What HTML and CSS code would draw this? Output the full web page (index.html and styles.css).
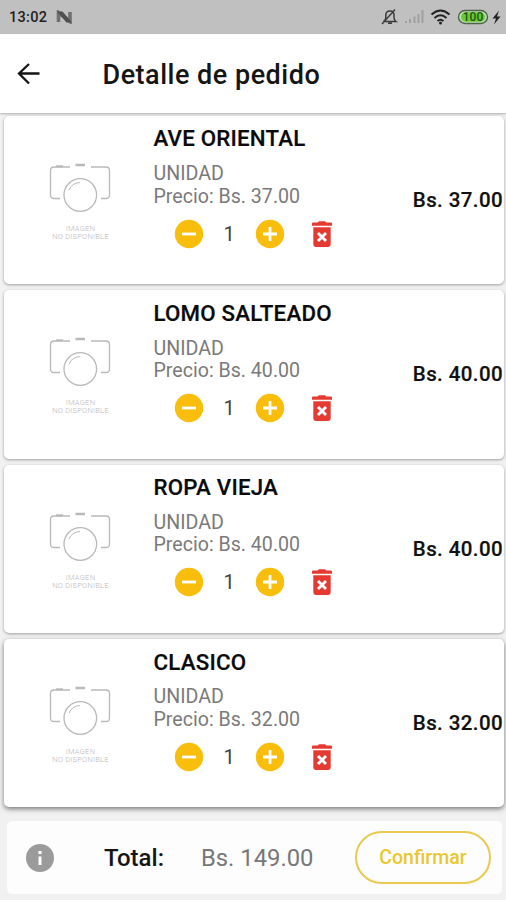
FILE: index.html
```html
<!DOCTYPE html>
<html lang="es">
<head>
<meta charset="utf-8">
<title>Detalle de pedido</title>
<link rel="stylesheet" href="styles.css">
</head>
<body>
<svg class="defs" width="0" height="0" aria-hidden="true">
  <symbol id="camera" viewBox="0 0 80 70">
    <g fill="none" stroke="#b9b9b9" stroke-width="1.300">
      <path d="M30 13H14q-3.500 0-3.500 3.500V41q0 3.500 3.500 3.500H20M51 13H66q3.500 0 3.500 3.500V41q0 3.500-3.500 3.500H61"/>
      <circle cx="40.300" cy="41" r="16.300"/>
      <path d="M29 36q3-7 11-7.500" stroke-width="1"/>
      <path d="M35.500 11h9.500" stroke-width="2.500"/>
      <path d="M16 12.300h7" stroke-width="2"/>
    </g>
  </symbol>
  <symbol id="minus" viewBox="0 0 30 30"><circle cx="15" cy="15" r="14.200" fill="#f9be0c"/><path d="M8 15h14" stroke="#fff" stroke-width="2.800"/></symbol>
  <symbol id="plus" viewBox="0 0 30 30"><circle cx="15" cy="15" r="14.200" fill="#f9be0c"/><path d="M8 15h14M15 8v14" stroke="#fff" stroke-width="2.800"/></symbol>
  <symbol id="trash" viewBox="0 0 22 28"><path d="M1 3.500q0-1 1-1h4.500L8 1.200h6l1.500 1.300H20q1 0 1 1v2.300H1zM2.300 7.200h17.400v17.400q0 2.400-2.400 2.400H4.700q-2.400 0-2.400-2.400z" fill="#e53a31"/><path d="M7 13l8 8M15 13l-8 8" stroke="#fff" stroke-width="2.900"/></symbol>
</svg>

<header class="status">
  <span class="clock">13:02</span>
  <svg class="nlogo" width="17" height="14" viewBox="0 0 17 14"><path d="M2.500 12V2.500L14 11.500V2" fill="none" stroke="#707070" stroke-width="3.600"/><path d="M1 1.500H6.500L16 12.500H10.500z" fill="#505050"/></svg>
  <svg class="indicators" width="122" height="20" viewBox="0 0 122 20">
    <g fill="none" stroke="#3b3b3b" stroke-width="1.500">
      <path d="M3.500 14.500h12.500q-2-1.500-2-4V8q0-4-4-4T5.800 8v2.500q0 2.500-2.300 4M8 16.300h4M2 17L15 2.500"/>
    </g>
    <path d="M26 16v-2M30 16v-4M34.500 16V9.500M38.500 16V7M42.500 16V3" stroke="#a0a0a0" stroke-width="2"/>
    <g fill="none" stroke="#222" stroke-width="2"><path d="M51.500 7.500q9-8 18 0M54.500 11q6-5.500 12 0M57.500 14q3-2.500 6 0"/></g><circle cx="60.500" cy="16" r="1.500" fill="#222"/>
    <rect x="78.500" y="3.500" width="29" height="13" rx="6.500" fill="#c5dcb9" stroke="#4c6643" stroke-width="1.400"/>
    <rect x="81" y="5.300" width="24" height="9.400" rx="4.700" fill="#68cc35"/>
    <text x="93" y="14.200" class="battery-text">100</text>
    <path d="M119 3.500l-6.500 8h3.500l-2 6 6.500-8H117z" fill="#222"/>
  </svg>
</header>

<nav class="appbar">
  <svg width="24" height="22" viewBox="0 0 24 22"><path d="M22.500 10.500H2M12 1L2 10.500l10 10" fill="none" stroke="#151515" stroke-width="2.300"/></svg>
  <h1>Detalle de pedido</h1>
</nav>

<main class="list">
  <article class="card">
    <figure class="photo"><svg width="80" height="70"><use href="#camera"/></svg><figcaption>IMAGEN<br>NO DISPONIBLE</figcaption></figure>
    <div class="info">
      <h2 class="name">AVE ORIENTAL</h2>
      <p class="unit">UNIDAD</p>
      <p class="price">Precio: Bs. 37.00</p>
      <div class="actions"><svg width="30" height="30"><use href="#minus"/></svg><span class="qty">1</span><svg width="30" height="30"><use href="#plus"/></svg><svg class="trash" width="22" height="28"><use href="#trash"/></svg></div>
    </div>
    <strong class="sum">Bs. 37.00</strong>
  </article>
  <article class="card">
    <figure class="photo"><svg width="80" height="70"><use href="#camera"/></svg><figcaption>IMAGEN<br>NO DISPONIBLE</figcaption></figure>
    <div class="info">
      <h2 class="name">LOMO SALTEADO</h2>
      <p class="unit">UNIDAD</p>
      <p class="price">Precio: Bs. 40.00</p>
      <div class="actions"><svg width="30" height="30"><use href="#minus"/></svg><span class="qty">1</span><svg width="30" height="30"><use href="#plus"/></svg><svg class="trash" width="22" height="28"><use href="#trash"/></svg></div>
    </div>
    <strong class="sum">Bs. 40.00</strong>
  </article>
  <article class="card">
    <figure class="photo"><svg width="80" height="70"><use href="#camera"/></svg><figcaption>IMAGEN<br>NO DISPONIBLE</figcaption></figure>
    <div class="info">
      <h2 class="name">ROPA VIEJA</h2>
      <p class="unit">UNIDAD</p>
      <p class="price">Precio: Bs. 40.00</p>
      <div class="actions"><svg width="30" height="30"><use href="#minus"/></svg><span class="qty">1</span><svg width="30" height="30"><use href="#plus"/></svg><svg class="trash" width="22" height="28"><use href="#trash"/></svg></div>
    </div>
    <strong class="sum">Bs. 40.00</strong>
  </article>
  <article class="card">
    <figure class="photo"><svg width="80" height="70"><use href="#camera"/></svg><figcaption>IMAGEN<br>NO DISPONIBLE</figcaption></figure>
    <div class="info">
      <h2 class="name">CLASICO</h2>
      <p class="unit">UNIDAD</p>
      <p class="price">Precio: Bs. 32.00</p>
      <div class="actions"><svg width="30" height="30"><use href="#minus"/></svg><span class="qty">1</span><svg width="30" height="30"><use href="#plus"/></svg><svg class="trash" width="22" height="28"><use href="#trash"/></svg></div>
    </div>
    <strong class="sum">Bs. 32.00</strong>
  </article>
</main>

<footer class="total">
  <svg width="28" height="28" viewBox="0 0 28 28"><circle cx="14" cy="14" r="14" fill="#9b9b9b"/><path d="M14 7v3M14 12.500v8.500" stroke="#fff" stroke-width="3"/></svg>
  <strong class="total-label">Total:</strong>
  <span class="amount">Bs. 149.00</span>
  <button class="confirm">Confirmar</button>
</footer>
</body>
</html>
```
FILE: styles.css
```css
* { box-sizing: border-box; }
body {
  margin: 0;
  width: 506px;
  height: 900px;
  overflow: hidden;
  display: flex;
  flex-direction: column;
  background: #f1f1f1;
  font-family: Roboto, sans-serif;
  color: #151515;
}
h1, h2, p, figure { margin: 0; }
svg { display: block; flex: none; }
.defs { position: absolute; }
.status {
  flex: none;
  height: 34px;
  background: #c0c0c0;
  display: flex;
  align-items: center;
  padding: 0 4px 0 9px;
}
.clock { font-size: 14.5px; font-weight: 500; letter-spacing: 0.3px; width: 47px; color: #222; padding-top: 1px; }
.indicators { margin-left: auto; }
.battery-text { font: 500 12px Roboto, sans-serif; fill: #24551a; text-anchor: middle; }
.appbar {
  flex: none;
  height: 79px;
  background: #fff;
  display: flex;
  align-items: center;
  padding-left: 17px;
  box-shadow: 0 1px 2px rgba(0, 0, 0, 0.28);
}
h1 { font-size: 27px; font-weight: 500; line-height: 32px; letter-spacing: 0.5px; margin-left: 61.500px; padding-top: 3px; }
.list { padding: 3px 2px 0 4px; display: flex; flex-direction: column; gap: 6px; }
.card {
  height: 168.400px;
  background: #fff;
  border-radius: 5px;
  display: flex;
  box-shadow: 0 1px 3px rgba(0, 0, 0, 0.35);
}
.card:last-child { height: 168px; box-shadow: 0 2px 5px rgba(0, 0, 0, 0.5); }
.photo { width: 80px; margin: 38px 30px 0 36px; }
figcaption {
  font-size: 7.5px;
  font-weight: 300;
  line-height: 8px;
  text-align: center;
  white-space: nowrap;
  color: #b8b8b8;
  letter-spacing: 0.25px;
  padding: 1px 0 0 1px;
}
.info { flex: 1; padding-left: 3.500px; }
.name { font-size: 22.3px; font-weight: 500; line-height: 30px; margin-top: 7.400px; letter-spacing: 0.2px; color: #0b0b0b; -webkit-text-stroke: 0.2px; }
.unit, .price { font-size: 19.6px; line-height: 22.500px; color: #7a7a7a; font-weight: 400; }
.unit { margin-top: 9.800px; }
.actions { display: flex; align-items: center; height: 30px; margin-top: 10.500px; padding-left: 20px; }
.qty { width: 51px; text-align: center; font-size: 20px; color: #444; }
.trash { margin-left: 26.500px; }
.sum { font-size: 20.5px; font-weight: 500; letter-spacing: 0.4px; line-height: 24px; margin: 72px 1px 0 0; color: #111; -webkit-text-stroke: 0.2px; }
.total {
  flex: none;
  height: 73px;
  margin: 14.300px 4px 0 7px;
  padding: 0 11px 0 19px;
  border-radius: 5px;
  background: #fdfdfd;
  display: flex;
  align-items: center;
}
.total-label { font-size: 24px; font-weight: 500; width: 97px; margin-left: 50px; }
.amount { font-size: 23.8px; color: #777; }
.confirm {
  margin-left: auto;
  width: 136px;
  height: 53px;
  border: 2px solid #e9c94f;
  border-radius: 27px;
  background: transparent;
  color: #e8c72f;
  font: 500 19.5px Roboto, sans-serif;
  padding: 0;
}
```
